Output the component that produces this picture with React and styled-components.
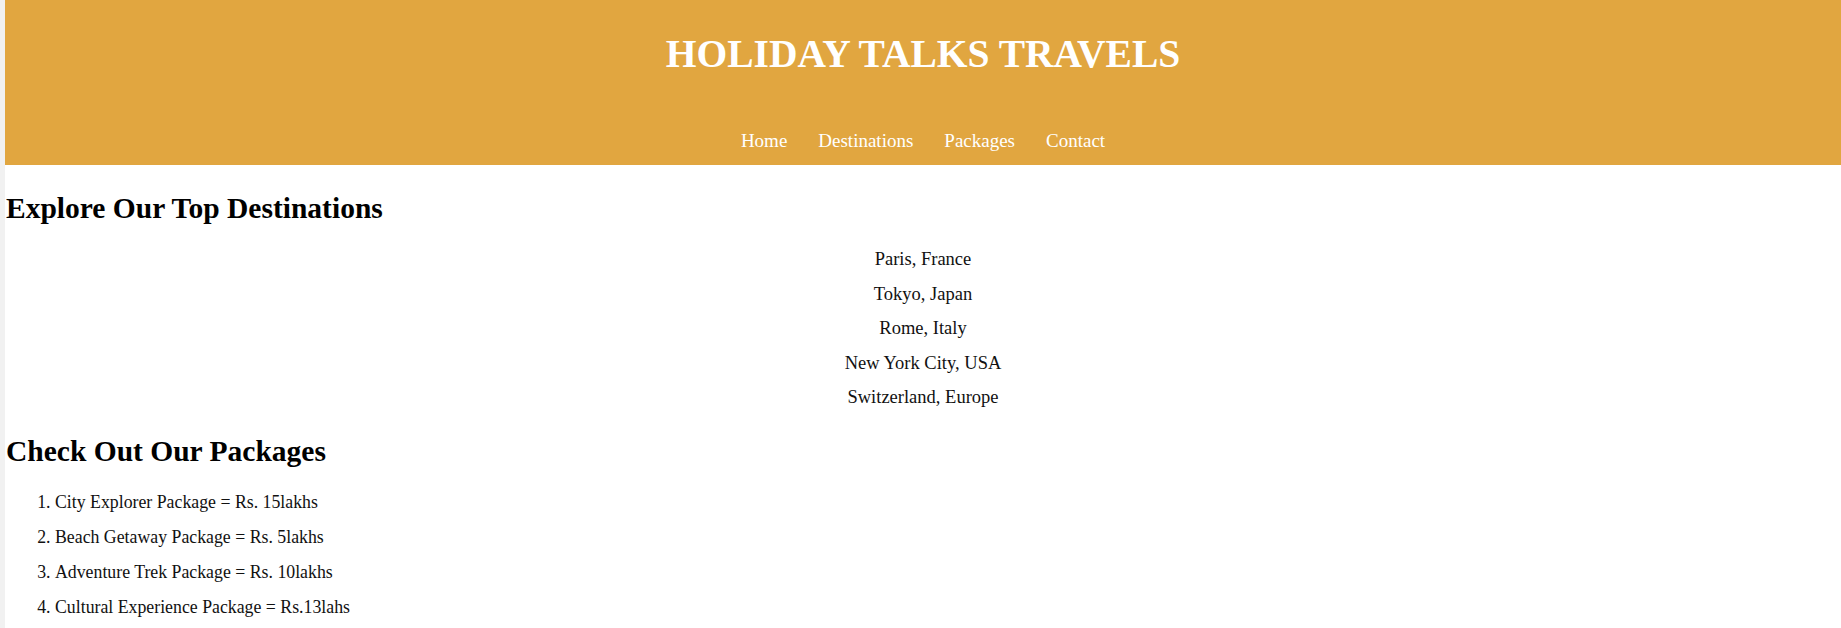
import React from 'react'
import styled, { createGlobalStyle } from 'styled-components'

const GlobalStyle = createGlobalStyle`
  html, body {
    margin: 0;
    padding: 0;
    background: #fff;
  }

  body {
    font-family: 'Liberation Serif', 'Times New Roman', serif;
    color: #111;
  }
`

const Page = styled.div`
  min-height: 628px;
  border-left: 5px solid #f1f1f1;
`

const Header = styled.header`
  background-color: #e1a640;
  color: #fff;
  text-align: center;
  padding: 30px 0 12px;
`

const Title = styled.h1`
  margin: 0;
  font-size: 39.5px;
  line-height: 48px;
  font-weight: bold;
`

const Nav = styled.nav`
  display: flex;
  justify-content: center;
  gap: 31px;
  margin-top: 51px;
`

const NavLink = styled.a`
  color: #fff;
  text-decoration: none;
  font-size: 19px;
  line-height: 24px;
`

const SectionTitle = styled.h2`
  margin: ${(p) => p.$top}px 0 0 1px;
  font-size: 29.5px;
  line-height: 34px;
  font-weight: bold;
  color: #000;
`

const DestinationList = styled.ul`
  list-style: none;
  margin: 17px 0 0;
  padding: 0;
  text-align: center;
`

const Destination = styled.li`
  font-size: 18.5px;
  line-height: 34.5px;
`

const PackageList = styled.ol`
  margin: 16.5px 0 0;
  padding-left: 50px;
`

const Package = styled.li`
  font-size: 17.8px;
  line-height: 35px;
`

const destinations = [
  'Paris, France',
  'Tokyo, Japan',
  'Rome, Italy',
  'New York City, USA',
  'Switzerland, Europe',
]

const packages = [
  'City Explorer Package = Rs. 15lakhs',
  'Beach Getaway Package = Rs. 5lakhs',
  'Adventure Trek Package = Rs. 10lakhs',
  'Cultural Experience Package = Rs.13lahs',
]

const App = () => (
  <Page>
    <GlobalStyle />
    <Header>
      <Title>HOLIDAY TALKS TRAVELS</Title>
      <Nav>
        <NavLink href="#">Home</NavLink>
        <NavLink href="#">Destinations</NavLink>
        <NavLink href="#">Packages</NavLink>
        <NavLink href="#">Contact</NavLink>
      </Nav>
    </Header>

    <SectionTitle $top={26}>Explore Our Top Destinations</SectionTitle>
    <DestinationList>
      {destinations.map((d) => (
        <Destination key={d}>{d}</Destination>
      ))}
    </DestinationList>

    <SectionTitle $top={19.5}>Check Out Our Packages</SectionTitle>
    <PackageList>
      {packages.map((p) => (
        <Package key={p}>{p}</Package>
      ))}
    </PackageList>
  </Page>
)

export default App
